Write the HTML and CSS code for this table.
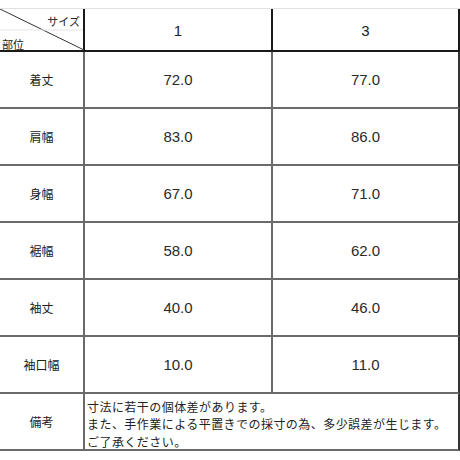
FILE: index.html
```html
<!DOCTYPE html>
<html lang="ja">
<head>
<meta charset="utf-8">
<link rel="stylesheet" href="styles.css">
</head>
<body>
<div class="table">
  <div class="cell corner">
    <svg class="diag" viewBox="0 0 85 41" preserveAspectRatio="none"><line x1="0" y1="0" x2="84" y2="41" stroke="#333" stroke-width="1"/><line x1="0" y1="21" x2="83" y2="21" stroke="#e4e4e4" stroke-width="1"/></svg>
    <span class="size-label">サイズ</span>
    <span class="part-label">部位</span>
  </div>
  <div class="cell head">1</div>
  <div class="cell head last">3</div>

  <div class="cell label">着丈</div><div class="cell num">72.0</div><div class="cell num last">77.0</div>
  <div class="cell label">肩幅</div><div class="cell num">83.0</div><div class="cell num last">86.0</div>
  <div class="cell label">身幅</div><div class="cell num">67.0</div><div class="cell num last">71.0</div>
  <div class="cell label">裾幅</div><div class="cell num">58.0</div><div class="cell num last">62.0</div>
  <div class="cell label">袖丈</div><div class="cell num">40.0</div><div class="cell num last">46.0</div>
  <div class="cell label">袖口幅</div><div class="cell num">10.0</div><div class="cell num last">11.0</div>

  <div class="cell label final">備考</div>
  <div class="cell note final last">
    <div class="note-lines">
      <span class="note-line">寸法に若干の個体差があります。</span>
      <span class="note-line">また、手作業による平置きでの採寸の為、多少誤差が生じます。</span>
      <span class="note-line">ご了承ください。</span>
    </div>
  </div>
</div>
</body>
</html>
```

FILE: styles.css
```css
html, body {
  margin: 0;
  padding: 0;
  background: #fff;
}

body {
  font-family: "Noto Sans CJK JP", "Liberation Sans", sans-serif;
  color: #222;
}

.table {
  margin-top: 8px;
  border-top: 1px solid #e2e2e2;
  width: 460px;
  display: grid;
  grid-template-columns: 85px 188px 187px;
  grid-template-rows: 43px repeat(7, 57px);
}

.cell {
  box-sizing: border-box;
  border-right: 2px solid #6a6a6a;
  border-bottom: 2px solid #6a6a6a;
  display: flex;
  align-items: center;
  justify-content: center;
}

.cell.last {
  border-right-color: #333;
}

.corner {
  position: relative;
  border-right-color: #1a1a1a;
  border-bottom-color: #1a1a1a;
  flex-direction: column;
  align-items: stretch;
  justify-content: space-between;
  padding: 5px 3px 0 3px;
  font-size: 11px;
  line-height: 14px;
}

.diag {
  position: absolute;
  left: 0;
  top: 0;
  width: 85px;
  height: 41px;
}

.size-label {
  position: relative;
  text-align: right;
}

.part-label {
  position: relative;
  text-align: left;
  margin-left: -1px;
  margin-bottom: -1px;
}

.head {
  border-bottom-color: #1a1a1a;
  border-right-color: #1a1a1a;
  font-family: "Liberation Sans", sans-serif;
  font-size: 15px;
  padding-top: 2px;
}

.head.last {
  border-right-color: #1a1a1a;
}

.label {
  font-size: 12px;
}

.num {
  font-family: "Liberation Sans", sans-serif;
  font-size: 15px;
  color: #2a2a2a;
}

.note {
  grid-column: 2 / 4;
  justify-content: flex-start;
  padding-left: 2px;
  padding-top: 5px;
}

.note-lines {
  display: flex;
  flex-direction: column;
}

.note-line {
  font-size: 12px;
  letter-spacing: 0.45px;
  line-height: 17.5px;
  height: 17.5px;
  white-space: nowrap;
}

.final {
  box-shadow: 0 2px 0 #dcdcdc;
}
```
